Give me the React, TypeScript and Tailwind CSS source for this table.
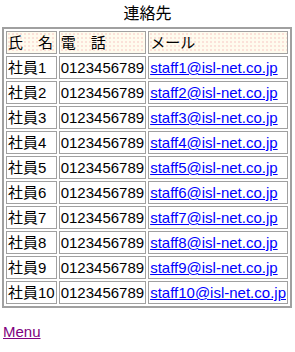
import React from 'react';

const staff = Array.from({ length: 10 }, (_, i) => ({
    name: `社員${i + 1}`,
    tel: '0123456789',
    mail: `staff${i + 1}@isl-net.co.jp`,
}));

const App: React.FC = () => {
    return (
        <div className="w-[295px] h-[352px] bg-white text-black text-[15px] font-['Liberation_Sans','Noto_Sans_CJK_JP',sans-serif]">
            <div className="pt-[4px] text-center text-[16px] leading-[20px]">連絡先</div>

            {/* 連絡先テーブル */}
            <table className="mt-[3px] ml-[2px] border-separate border-spacing-[2px] border-2 border-[#a0a0a0] leading-[19px]">
                <thead>
                    <tr>
                        {['氏　名', '電　話', 'メール'].map((h) => (
                            <th
                                key={h}
                                className="border border-[#a0a0a0] p-[1px] text-left font-normal bg-[#fffbee] bg-[radial-gradient(#fbe0d8_0.7px,transparent_0.9px)] bg-[size:4px_4px]"
                            >
                                {h}
                            </th>
                        ))}
                    </tr>
                </thead>
                <tbody>
                    {staff.map((s) => (
                        <tr key={s.name}>
                            <td className="border border-[#a0a0a0] p-[1px] whitespace-nowrap">{s.name}</td>
                            <td className="border border-[#a0a0a0] p-[1px] whitespace-nowrap">{s.tel}</td>
                            <td className="border border-[#a0a0a0] p-[1px] whitespace-nowrap">
                                <a href="#" className="text-[#0000ff] underline">{s.mail}</a>
                            </td>
                        </tr>
                    ))}
                </tbody>
            </table>

            <div className="mt-[15px] ml-[3px] leading-[18px]">
                <a href="#" className="text-[#800080] underline">Menu</a>
            </div>
        </div>
    );
};

export default App;
